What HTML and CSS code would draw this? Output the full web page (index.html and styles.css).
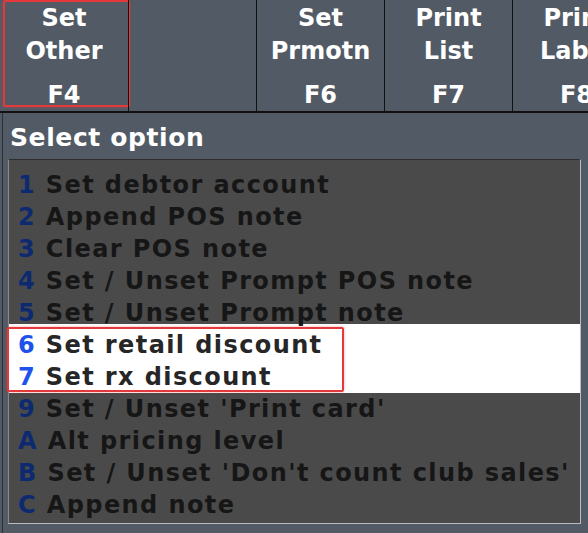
FILE: index.html
```html
<!DOCTYPE html>
<html lang="en">
<head>
    <meta charset="UTF-8">
    <title>Select option</title>
    <link rel="stylesheet" href="styles.css">
</head>
<body>

<div class="fkeys">
    <div class="fkey">
        <div class="fkey-label">Set<br>Other</div>
        <div class="fkey-code">F4</div>
        <div class="callout callout-fkey"></div>
    </div>
    <div class="fkey"></div>
    <div class="fkey">
        <div class="fkey-label">Set<br>Prmotn</div>
        <div class="fkey-code">F6</div>
    </div>
    <div class="fkey">
        <div class="fkey-label">Print<br>List</div>
        <div class="fkey-code">F7</div>
    </div>
    <div class="fkey">
        <div class="fkey-label">Print<br>Label</div>
        <div class="fkey-code">F8</div>
    </div>
</div>

<div class="dialog">
    <h1 class="dialog-title">Select option</h1>
    <div class="option-list">
        <div class="option"><span class="key">1</span> Set debtor account</div>
        <div class="option"><span class="key">2</span> Append POS note</div>
        <div class="option"><span class="key">3</span> Clear POS note</div>
        <div class="option"><span class="key">4</span> Set / Unset Prompt POS note</div>
        <div class="option"><span class="key">5</span> Set / Unset Prompt note</div>
        <div class="option-group selected">
            <div class="option"><span class="key">6</span> Set retail discount</div>
            <div class="option"><span class="key">7</span> Set rx discount</div>
        </div>
        <div class="option"><span class="key">9</span> Set / Unset 'Print card'</div>
        <div class="option"><span class="key">A</span> Alt pricing level</div>
        <div class="option"><span class="key">B</span> Set / Unset 'Don't count club sales'</div>
        <div class="option"><span class="key">C</span> Append note</div>
        <div class="callout callout-options"></div>
    </div>
</div>

</body>
</html>
```

FILE: styles.css
```css
html, body { margin: 0; height: 100%; overflow: hidden; }
body { background-color: #525b65; font-family: "DejaVu Sans", Verdana, sans-serif; font-weight: bold; }

.fkeys { display: flex; height: 111px; border-bottom: 2px solid #111; width: 640px; }
.fkey { position: relative; box-sizing: border-box; width: 128px; flex: none; border-left: 1px solid #111; color: #fff; text-align: center; font-size: 24px; line-height: 33px; padding-top: 2px; }
.fkey:first-child { border-left: none; }
.fkey-code { margin-top: 11px; }

.callout { position: absolute; border: 2px solid #e5383b; border-radius: 2px; box-shadow: 0 0 3px rgba(229,56,59,0.45); box-sizing: border-box; pointer-events: none; }
.callout-fkey { left: 3px; top: 0; width: 127px; height: 107px; }
.callout-options { left: -2px; top: 167px; width: 337px; height: 65px; }

.dialog { margin-left: 2px; border-left: 1px solid #2b3036; height: 420px; }
.dialog-title { margin: 0; padding: 7px 0 0 7px; color: #fff; font-size: 25px; line-height: 36px; letter-spacing: 0.6px; }

.option-list { position: relative; margin: 3px 0 0 5px; width: 573px; box-sizing: border-box; background-color: #4a4a4a; border: 1px solid #bdbdbd; border-top-color: #2e2e2e; border-left-color: #8a8a8a; padding: 9px 0 2px 0; }
.option { padding-left: 9px; font-size: 24px; line-height: 32px; letter-spacing: 1.4px; color: #161616; white-space: nowrap; }
.key { color: #0d2a70; }

.option-group.selected { background-color: #fff; margin-top: -5px; padding-top: 5px; }
.option-group.selected .option { color: #262626; }
.option-group.selected .key { color: #1d52ec; }
```
